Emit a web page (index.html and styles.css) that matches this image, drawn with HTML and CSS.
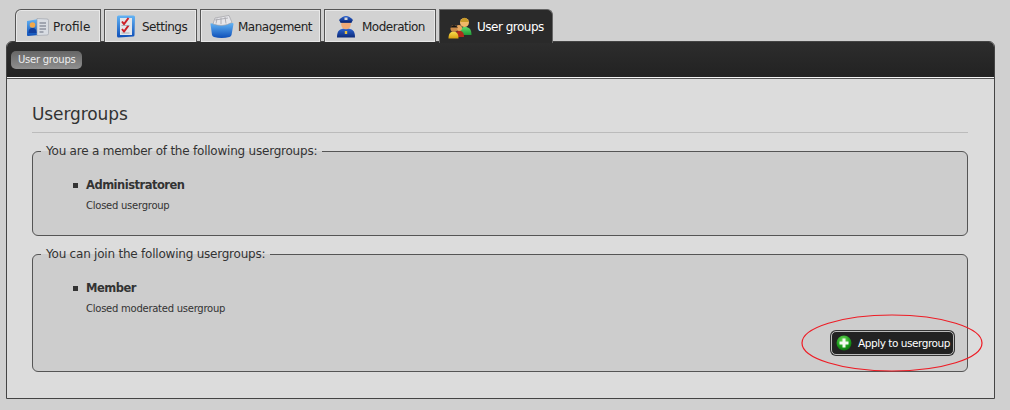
FILE: index.html
```html
<!DOCTYPE html>
<html lang="en">
  <head>
    <meta charset="UTF-8" />
    <title>User groups</title>
    <link rel="stylesheet" href="styles.css">
  </head>
  <body>
    <svg class="defs" width="0" height="0">
      <defs>
        <linearGradient id="blue" x1="0" y1="0" x2="0" y2="1">
          <stop offset="0" stop-color="#63b4f5"/>
          <stop offset="1" stop-color="#0e4fb8"/>
        </linearGradient>
        <linearGradient id="navy" x1="0" y1="0" x2="0" y2="1">
          <stop offset="0" stop-color="#2b63d0"/>
          <stop offset="1" stop-color="#0c2a7a"/>
        </linearGradient>
        <linearGradient id="green" x1="0" y1="0" x2="0" y2="1">
          <stop offset="0" stop-color="#5fd868"/>
          <stop offset="1" stop-color="#1e9a38"/>
        </linearGradient>
        <linearGradient id="yellow" x1="0" y1="0" x2="0" y2="1">
          <stop offset="0" stop-color="#f8e050"/>
          <stop offset="1" stop-color="#d8a010"/>
        </linearGradient>
        <radialGradient id="orb" cx=".45" cy=".3" r=".8">
          <stop offset="0" stop-color="#6fdc5a"/>
          <stop offset=".6" stop-color="#1a9a1a"/>
          <stop offset="1" stop-color="#0a5a0a"/>
        </radialGradient>
      </defs>
    </svg>

    <div class="tabs">
      <a class="tab tab-profile">
        <svg width="23" height="20" viewBox="0 0 23 20">
          <path d="M1 4l12-2 0 16-11 1q-1 0-1-1z" fill="url(#blue)"/>
          <path d="M11 1.500l10 .5q1.500 0 1.500 1.500v13q0 1.500-1.500 1.500l-10 .5z" fill="#d8dce2" stroke="#9aa0aa" stroke-width=".6"/>
          <circle cx="6.500" cy="8" r="2.800" fill="#f2a84a"/>
          <path d="M2.500 16c0-4 1.800-5 4-5s4 1 4 5z" fill="#123f9e"/>
          <path d="M13.500 6h6.500M13.500 9h6.500M13.500 12h6.500M13.500 15h4" stroke="#8d93a0" stroke-width="1.300"/>
        </svg>
        Profile
      </a>
      <a class="tab tab-settings">
        <svg width="20" height="23" viewBox="0 0 20 23">
          <path d="M1 2q0-1.500 1.500-1.500h15q1.500 0 1.500 1.500l-.5 18q0 1.500-1.500 1.500l-14.500 1q-1.500 0-1.500-1.500z" fill="url(#blue)"/>
          <rect x="4" y="3" width="12" height="17" fill="#e4e6ea"/>
          <path d="M6 6.500l2 2.500 4.500-6M6 14l2 2.500 4.500-6" fill="none" stroke="#cc1f28" stroke-width="2"/>
          <path d="M5.500 10.500h8M5.500 18h8" stroke="#9aa0aa" stroke-width=".8"/>
        </svg>
        Settings
      </a>
      <a class="tab tab-management">
        <svg width="24" height="23" viewBox="0 0 24 23">
          <path d="M.5 9q0-1 1-.5l21-.5q1 0 1 1l-2 11q-.5 1.500-2 2-8 2-15.500 0-1.500-.5-2-2z" fill="url(#blue)"/>
          <path d="M3 9l2-6 14-2.500 3 7q-9 5-19 1.500z" fill="#e6e6ea" stroke="#98989e" stroke-width=".6"/>
          <path d="M7 3.500l-1 5M11 2.500v6.500M15 2l1 6.500M5 5l13-2" stroke="#a8a8ae" stroke-width=".9" fill="none"/>
        </svg>
        Management
      </a>
      <a class="tab tab-moderation">
        <svg width="18" height="23" viewBox="0 0 18 23">
          <path d="M0 22.500c0-7 2.500-9 9-9s9 2 9 9z" fill="url(#navy)"/>
          <circle cx="9" cy="9.500" r="4.800" fill="#efaa78"/>
          <path d="M2 5q7-8 14 0l-1.500 2.500h-11z" fill="url(#navy)"/>
          <rect x="7.500" y="2.500" width="3" height="2.500" fill="#d8d8d8"/>
          <path d="M3.500 7h11" stroke="#0c2a7a" stroke-width="1.500"/>
          <rect x="7.800" y="16" width="2.400" height="3" fill="#e8c040"/>
        </svg>
        Moderation
      </a>
      <a class="tab tab-active tab-usergroups">
        <svg width="24" height="23" viewBox="0 0 24 23">
          <path d="M10.500 19c0-6 2.500-8 6.500-8s6.500 2 6.500 8z" fill="url(#green)"/>
          <circle cx="16.500" cy="6.500" r="4.500" fill="#f0b868"/>
          <path d="M12 6q4.500-8.500 9 0z" fill="#c89a28"/>
          <path d="M7 21c0-5 2-6 4.500-6s4.500 1 4.500 6z" fill="#b02a1c"/>
          <circle cx="11" cy="12" r="3" fill="#e8a860"/>
          <path d="M.5 22.500c0-5 2-7 5-7s5 2 5 7z" fill="url(#yellow)"/>
          <circle cx="6" cy="12.500" r="3.500" fill="#c98a4a"/>
          <path d="M2 11.500q4-5 8 0z" fill="#141414"/>
        </svg>
        User groups
      </a>
    </div>

    <div class="panel">
      <div class="subnav">
        <a class="subnav-item">User groups</a>
      </div>
      <div class="content">
        <h2>Usergroups</h2>

        <fieldset class="group group-member">
          <legend>You are a member of the following usergroups:</legend>
          <ul>
            <li>
              <strong>Administratoren</strong>
              <small>Closed usergroup</small>
            </li>
          </ul>
        </fieldset>

        <fieldset class="group group-join">
          <legend>You can join the following usergroups:</legend>
          <ul>
            <li>
              <strong>Member</strong>
              <small>Closed moderated usergroup</small>
            </li>
          </ul>
          <div class="actions">
            <a class="apply-btn">
              <svg width="16" height="16" viewBox="0 0 16 16">
                <circle cx="8" cy="8" r="7.500" fill="url(#orb)"/>
                <path d="M6.500 3.500h3v3h3v3h-3v3h-3v-3h-3v-3h3z" fill="#f4f8f0"/>
              </svg>
              Apply to usergroup
            </a>
          </div>
        </fieldset>
      </div>
    </div>

    <svg class="highlight" width="184" height="60" viewBox="0 0 184 60">
      <ellipse cx="91" cy="29" rx="90" ry="28" fill="none" stroke="#ee1c25" stroke-width="1.200"/>
    </svg>
  </body>
</html>
```

FILE: styles.css
```css
html, body {
  height: 100%;
}

body {
  margin: 0;
  padding: 9px 15px 0 6px;
  box-sizing: border-box;
  overflow: hidden;
  background-color: #d0d0d0;
  color: #333;
  font-family: "DejaVu Sans", Verdana, sans-serif;
  font-size: 12px;
  position: relative;
}

.defs {
  position: absolute;
}

.tabs {
  display: flex;
  gap: 3px;
  padding-left: 9px;
  height: 32px;
}

.tab {
  display: flex;
  align-items: center;
  box-sizing: border-box;
  height: 33px;
  border: 1px solid #555;
  border-bottom: none;
  background-color: #d2d2d2;
  box-shadow: inset 0 0 0 1px #e8e8e8;
  color: #222;
  letter-spacing: -0.5px;
}

.tab-profile {
  width: 86px;
  gap: 4px;
  padding: 2px 0 0 10px;
  letter-spacing: 0;
  border-top-left-radius: 6px;
}

.tab-settings {
  width: 93px;
  gap: 6px;
  padding: 1px 0 0 11px;
}

.tab-management {
  width: 121px;
  gap: 4px;
  padding: 1px 0 0 9px;
}

.tab-moderation {
  width: 112px;
  gap: 7px;
  padding: 1px 0 0 12px;
}

.tab-usergroups {
  width: 114px;
  gap: 5px;
  padding: 1px 0 0 8px;
  border-top-right-radius: 6px;
}

.tab-active {
  position: relative;
  z-index: 1;
  height: 34px;
  background-color: #2a2a2a;
  border-color: #666;
  box-shadow: none;
  color: #fff;
}

.panel {
  height: 358px;
  box-sizing: border-box;
  border: 1px solid #444;
  border-top-left-radius: 6px;
  border-top-right-radius: 6px;
  background-color: #dcdcdc;
}

.subnav {
  height: 36px;
  box-sizing: border-box;
  padding: 9px 4px 0;
  border-bottom: 1px solid #f4f4f4;
  border-top-left-radius: 5px;
  border-top-right-radius: 5px;
  background: linear-gradient(#2d2d2d, #222);
  box-shadow: 0 1px 0 #555;
}

.subnav-item {
  display: inline-block;
  padding: 2px 7px;
  height: 14px;
  line-height: 14px;
  border-radius: 5px;
  background: linear-gradient(#666, #8f8f8f);
  color: #eee;
  font-size: 10px;
  letter-spacing: -0.25px;
}

.content {
  padding: 24px 26px 0 25px;
}

h2 {
  margin: 0 0 17px;
  padding-bottom: 6px;
  border-bottom: 1px solid #bbb;
  font-size: 17px;
  line-height: 24px;
  font-weight: normal;
  color: #333;
  letter-spacing: -0.1px;
}

.group {
  margin: -6px 0 18px;
  padding: 0 13px 0 0;
  min-width: 0;
  box-sizing: border-box;
  border: 1px solid #555;
  border-radius: 6px;
  background-color: #cdcdcd;
}

.group-member {
  height: 92px;
}

.group-join {
  height: 125px;
  margin-top: -7px;
}

.group legend {
  margin-left: 8px;
  padding: 0 5px;
  height: 15px;
  line-height: 15px;
  letter-spacing: -0.22px;
  color: #333;
}

ul {
  margin: 19px 0 0;
  padding: 0 0 0 53px;
  list-style: none;
}

li {
  position: relative;
}

li::before {
  content: "";
  position: absolute;
  left: -13px;
  top: 5px;
  width: 5px;
  height: 5px;
  background-color: #333;
}

li strong {
  display: block;
  font-size: 11.500px;
  line-height: 15px;
  letter-spacing: -0.5px;
}

li small {
  display: block;
  margin-top: 6px;
  font-size: 10px;
  line-height: 13px;
  letter-spacing: -0.25px;
}

.actions {
  display: flex;
  justify-content: flex-end;
  margin-top: 16px;
}

.apply-btn {
  display: flex;
  align-items: center;
  gap: 6px;
  box-sizing: border-box;
  width: 123px;
  height: 24px;
  padding-left: 4px;
  border: 1px solid #bbb;
  border-radius: 5px;
  background-color: #222;
  box-shadow: 0 0 0 1px #333;
  color: #fff;
  font-size: 10.500px;
  letter-spacing: -0.45px;
  white-space: nowrap;
}

/* hand drawn ring over the screenshot */
.highlight {
  position: absolute;
  left: 801px;
  top: 314px;
}
```
